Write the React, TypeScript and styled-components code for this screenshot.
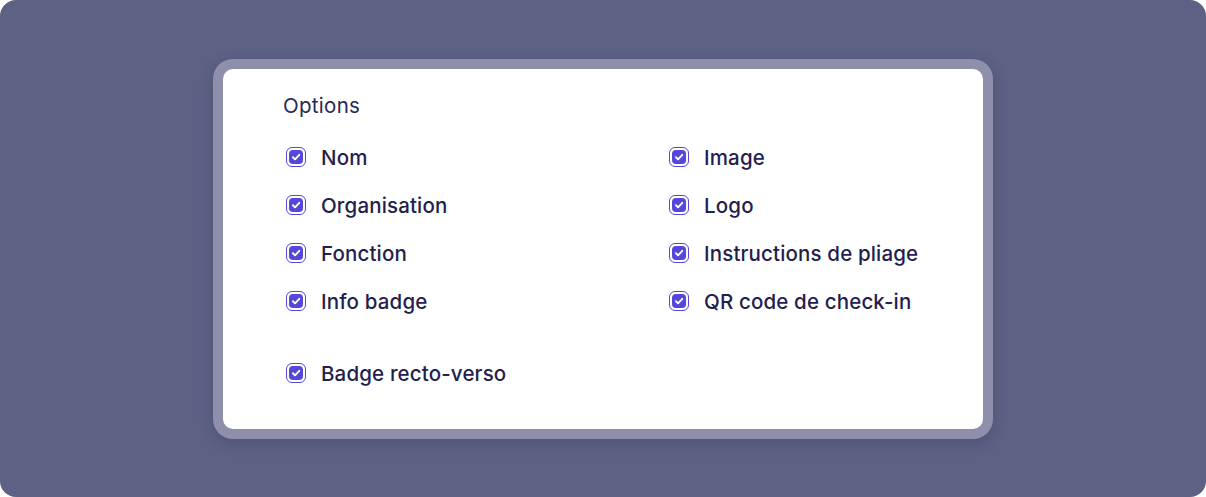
import React from "react";
import styled, { createGlobalStyle } from "styled-components";

const GlobalStyle = createGlobalStyle`
  html, body {
    margin: 0;
    padding: 0;
    background: #ffffff;
  }
  body {
    font-family: Inter, "Noto Sans", sans-serif;
  }
`;

const left = ["Nom", "Organisation", "Fonction", "Info badge"];
const right = ["Image", "Logo", "Instructions de pliage", "QR code de check-in"];

const CheckBox = () => (
  <Box>
    <svg width="11" height="11" viewBox="0 0 12 12" fill="none">
      <path
        d="M3.4 6.2l1.8 1.8 3.6-3.9"
        stroke="#fff"
        strokeWidth="1.6"
        strokeLinecap="round"
        strokeLinejoin="round"
      />
    </svg>
  </Box>
);

const Option = ({ label }: { label: string }) => (
  <OptionRow>
    <CheckBox />
    <Label>{label}</Label>
  </OptionRow>
);

const App = () => {
  return (
    <>
      <GlobalStyle />
      <Page>
        <Frame>
          <Card>
            <Title>Options</Title>
            <Grid>
              {left.map((l, i) => (
                <React.Fragment key={l}>
                  <Option label={l} />
                  <Option label={right[i]} />
                </React.Fragment>
              ))}
            </Grid>
            <Extra>
              <Option label="Badge recto-verso" />
            </Extra>
          </Card>
        </Frame>
      </Page>
    </>
  );
};

const Page = styled.div`
  width: 1206px;
  height: 497px;
  border-radius: 16px;
  background: #5d6184;
  display: flex;
  align-items: center;
  justify-content: center;
`;

const Frame = styled.div`
  padding: 10px;
  border-radius: 20px;
  background: #8e90ab;
  box-shadow: 0 4px 14px rgba(40, 42, 70, 0.25);
`;

const Card = styled.div`
  width: 760px;
  height: 360px;
  box-sizing: border-box;
  padding: 24px 0 0 60px;
  background: #ffffff;
  border-radius: 10px;
  display: flex;
  flex-direction: column;
`;

const Title = styled.div`
  font-size: 20.5px;
  font-weight: 400;
  color: #2b2752;
  line-height: 26px;
  letter-spacing: 0.3px;
`;

const Grid = styled.div`
  display: grid;
  grid-template-columns: 383px 1fr;
  row-gap: 23px;
  margin-top: 26px;
`;

const Extra = styled.div`
  margin-top: 47px;
`;

const OptionRow = styled.div`
  display: flex;
  align-items: center;
  gap: 15px;
  padding-left: 3px;
  height: 25px;
`;

const Box = styled.div`
  width: 20px;
  height: 20px;
  box-sizing: border-box;
  border: 1.5px solid #5548d9;
  border-radius: 6px;
  padding: 2px;
  background: #ffffff;
  display: flex;
  flex-shrink: 0;

  & > svg {
    flex: 1;
    width: 100%;
    height: 100%;
    background: #5548d9;
    border-radius: 4px;
  }
`;

const Label = styled.span`
  font-size: 20.5px;
  font-weight: 500;
  color: #231e4d;
  line-height: 25px;
  letter-spacing: 0.15px;
`;

export default App;
